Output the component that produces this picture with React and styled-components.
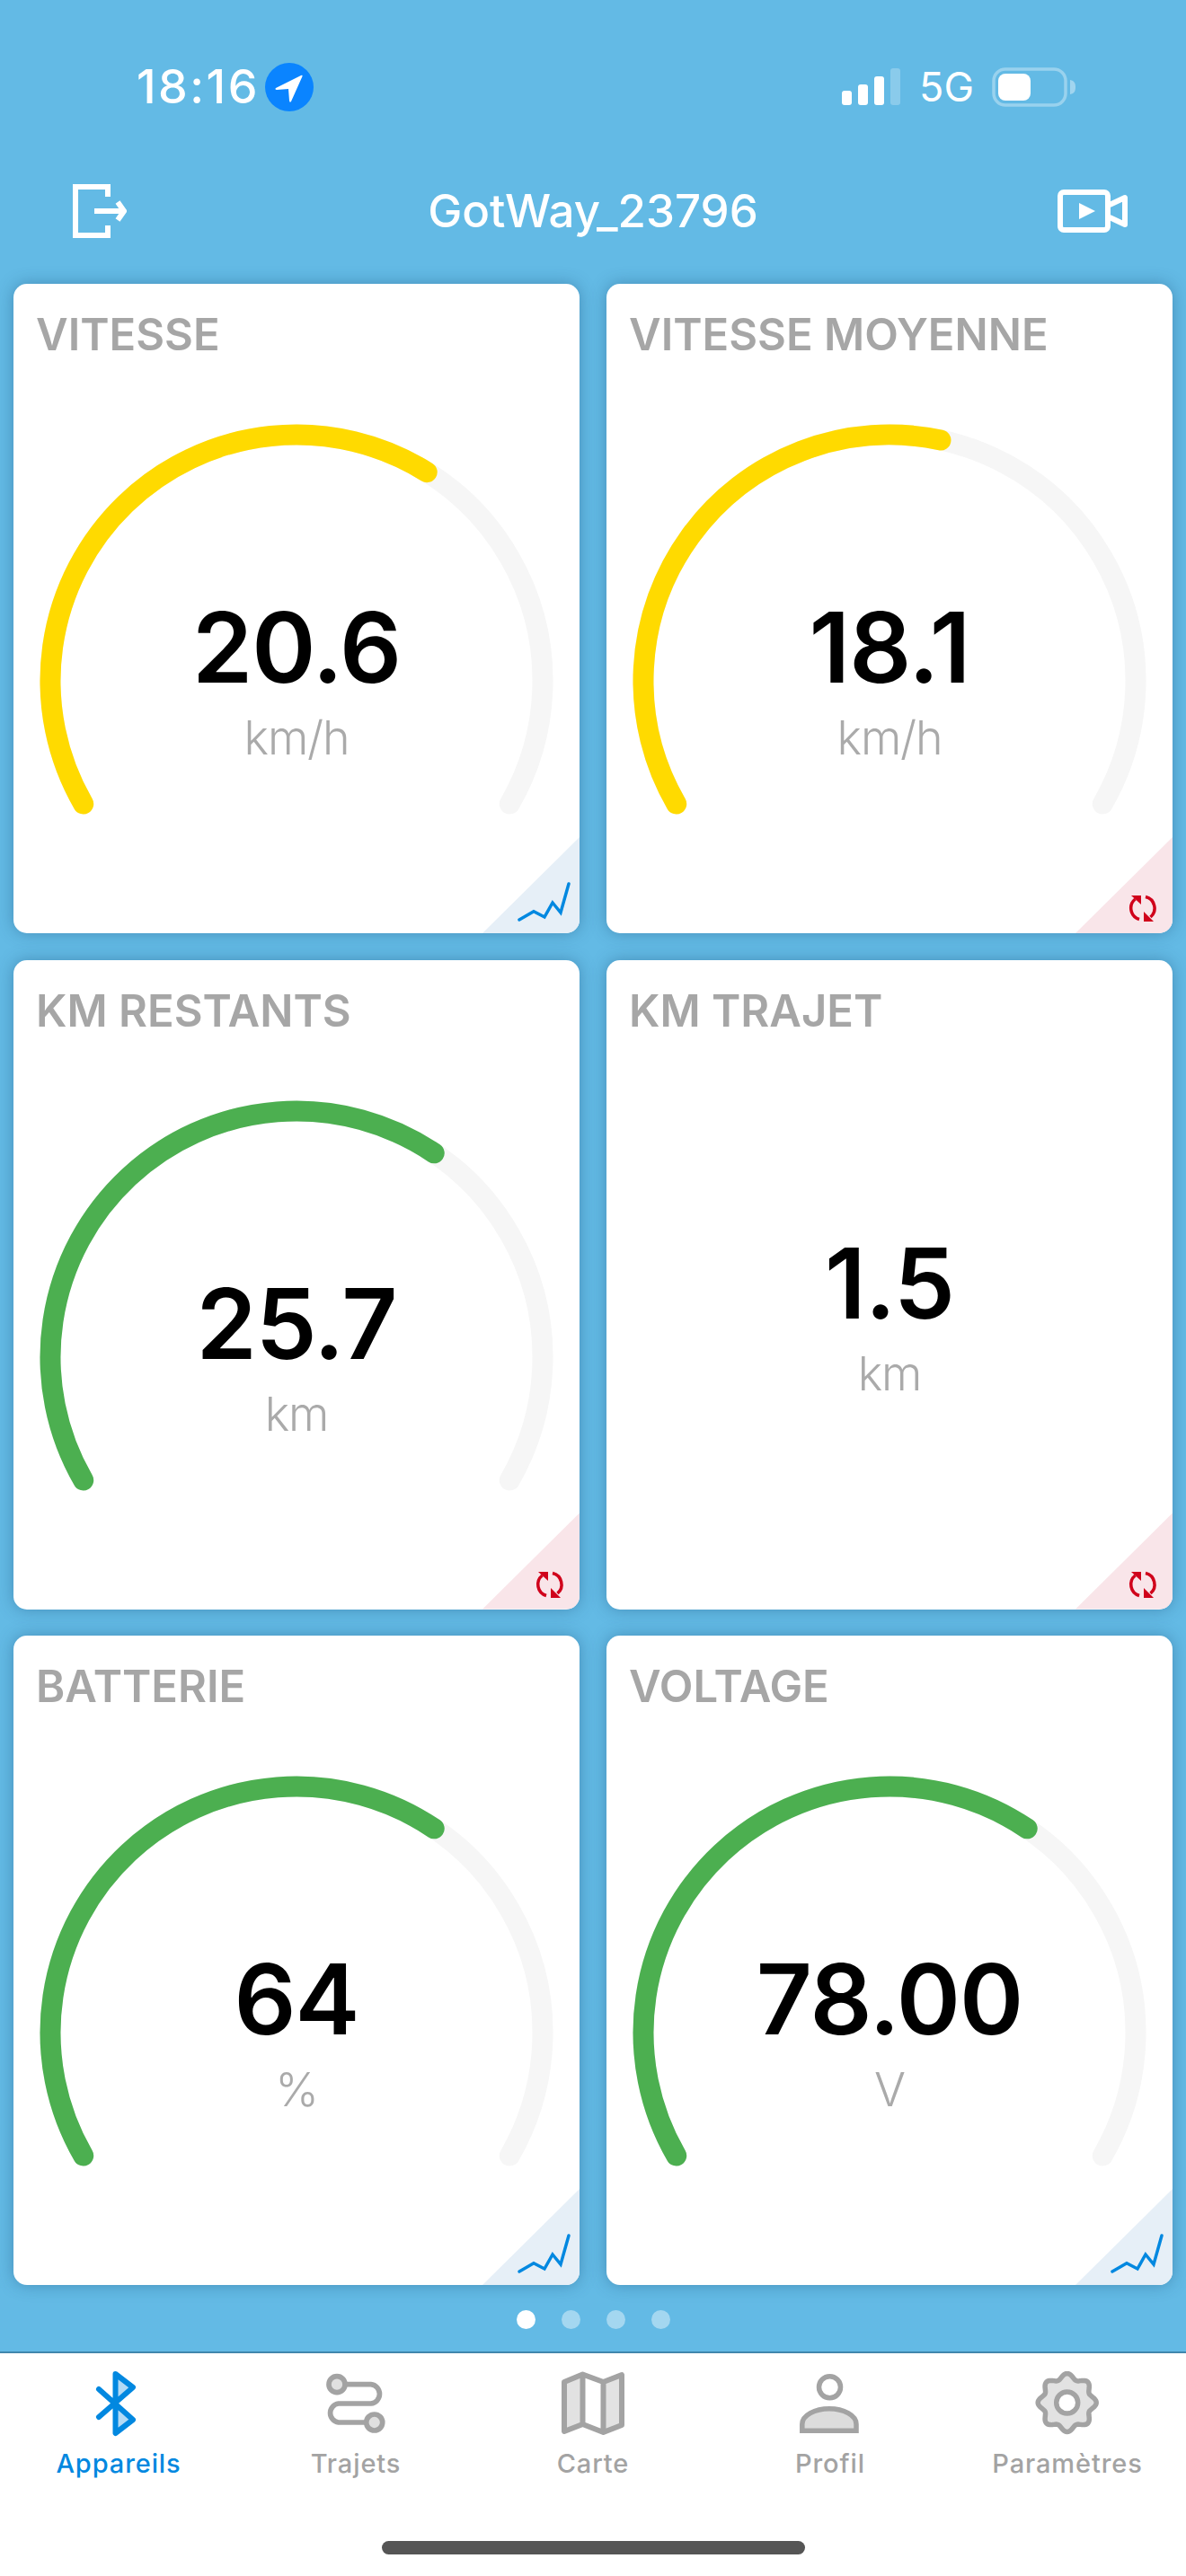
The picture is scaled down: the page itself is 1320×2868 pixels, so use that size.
import React from 'react';
import styled, { createGlobalStyle } from 'styled-components';

const GlobalStyle = createGlobalStyle`
	html, body {
		margin: 0;
		padding: 0;
		background: #63bae5;
	}
	* {
		box-sizing: border-box;
	}
`;

const Screen = styled.div`
	width: 1320px;
	height: 2868px;
	display: flex;
	flex-direction: column;
	background: #63bae5;
	font-family: Inter, 'Liberation Sans', sans-serif;
	overflow: hidden;
`;

const StatusBar = styled.div`
	height: 196px;
	padding: 70px 122px 0 152px;
	display: flex;
	justify-content: space-between;
	align-items: flex-start;
	color: #fff;
`;

const StatusLeft = styled.div`
	display: flex;
	align-items: center;
	gap: 6px;
	height: 54px;
`;

const Clock = styled.span`
	font-size: 52px;
	font-weight: 500;
	letter-spacing: 2.5px;
	line-height: 54px;
`;

const StatusRight = styled.div`
	display: flex;
	align-items: center;
	height: 54px;
`;

const NetworkLabel = styled.span`
	font-size: 45px;
	font-weight: 400;
	line-height: 54px;
	margin: 0 20px 0 21px;
`;

const Header = styled.div`
	height: 120px;
	padding: 9px 65px 0 81px;
	display: flex;
	justify-content: space-between;
	align-items: flex-start;
	position: relative;
`;

const HeaderTitle = styled.div`
	position: absolute;
	left: 0;
	right: 0;
	top: 9px;
	text-align: center;
	color: #fff;
	font-size: 51px;
	font-weight: 500;
	line-height: 60px;
`;

const CameraIcon = styled.svg`
	margin-top: 6px;
`;

const Grid = styled.div`
	padding: 0 15px;
	display: grid;
	grid-template-columns: 630px 630px;
	grid-auto-rows: 723px;
	column-gap: 30px;
	row-gap: 29.5px;
`;

const Card = styled.div`
	position: relative;
	display: flex;
	flex-direction: column;
	background: #fff;
	border-radius: 15px;
	box-shadow: 0 0 18px rgba(20, 70, 110, 0.38);
	overflow: hidden;
`;

const CardTitle = styled.div`
	position: absolute;
	top: 27px;
	left: 25px;
	color: #a6a6a6;
	font-size: 49px;
	font-weight: 600;
	line-height: 60px;
	white-space: nowrap;
`;

const GaugeSvg = styled.svg`
	position: absolute;
	left: 0;
	top: 0;
	display: block;
`;

const Readout = styled.div`
	flex: 1;
	display: flex;
	flex-direction: column;
	align-items: center;
	padding-top: ${(p) => (p.$plain ? '305px' : '350px')};
`;

const Value = styled.div`
	color: #000;
	font-size: 108px;
	font-weight: 600;
	line-height: 110px;
	letter-spacing: -1px;
	position: relative;
`;

const Unit = styled.div`
	color: #aaa;
	font-size: 52px;
	font-weight: 300;
	letter-spacing: -1.2px;
	line-height: 60px;
	margin-top: 16px;
	position: relative;
`;

const Corner = styled.div`
	position: absolute;
	right: 0;
	bottom: 0;
	width: 108px;
	height: 107px;
	background: ${(p) => (p.$kind === 'chart' ? '#e6eff7' : '#f9e5e9')};
	clip-path: polygon(100% 0, 100% 100%, 0 100%);
`;

const CornerIcon = styled.svg`
	position: absolute;
	right: 0;
	bottom: 0;
`;

const Dots = styled.div`
	height: 74px;
	padding-top: 28px;
	display: flex;
	justify-content: center;
	gap: 29px;
`;

const Dot = styled.div`
	width: 21px;
	height: 21px;
	border-radius: 50%;
	background: ${(p) => (p.$active ? '#fff' : 'rgba(255, 255, 255, 0.42)')};
`;

const TabBar = styled.div`
	flex: 1;
	position: relative;
	display: grid;
	grid-template-columns: repeat(5, 264px);
	background: #fff;
	border-top: 2px solid #4187ad;
`;

const Tab = styled.div`
	display: flex;
	flex-direction: column;
	align-items: center;
	padding-top: 20px;
	color: ${(p) => (p.$active ? '#0288e0' : '#a3a3a3')};
`;

const TabIcon = styled.svg`
	display: block;
	width: 90px;
	height: 80px;
`;

const TabLabel = styled.span`
	margin-top: 5px;
	font-size: 29px;
	font-weight: 500;
	letter-spacing: 0.9px;
	line-height: 36px;
`;

const HomeIndicator = styled.div`
	position: absolute;
	left: 425px;
	top: 209px;
	width: 471px;
	height: 15px;
	border-radius: 8px;
	background: #555;
`;

const CX = 315;
const CY = 442;
const R = 274;
const START = -120;
const END = 120;

function pointAt(angle) {
	const rad = (angle * Math.PI) / 180;
	return [CX + R * Math.sin(rad), CY - R * Math.cos(rad)];
}

function arcPath(from, to) {
	const [x1, y1] = pointAt(from);
	const [x2, y2] = pointAt(to);
	const large = to - from > 180 ? 1 : 0;
	return `M ${x1} ${y1} A ${R} ${R} 0 ${large} 1 ${x2} ${y2}`;
}

// wavy outline of the settings cog, 8 lobes with one pointing up
function cogPath(cx, cy) {
	const pts = [];
	for (let i = 0; i < 160; i++) {
		const t = (i / 160) * Math.PI * 2;
		const r = 29.5 + 3 * Math.cos(8 * t);
		pts.push(`${(cx + r * Math.sin(t)).toFixed(2)} ${(cy - r * Math.cos(t)).toFixed(2)}`);
	}
	return `M ${pts.join(' L ')} Z`;
}

function Gauge({ color, angle }) {
	return (
		<GaugeSvg width="630" height="723" viewBox="0 0 630 723">
			<path d={arcPath(START, END)} fill="none" stroke="#f6f6f6" strokeWidth="23" strokeLinecap="round" />
			<path d={arcPath(START, angle)} fill="none" stroke={color} strokeWidth="23" strokeLinecap="round" />
		</GaugeSvg>
	);
}

function CornerBadge({ kind }) {
	return (
		<>
			<Corner $kind={kind} />
			{kind === 'chart' ? (
				<CornerIcon width="108" height="107" viewBox="0 0 108 107">
					<path
						d="M41 92 L57 82.700 L69 89 L78 73 L87 84 L96 52"
						fill="none"
						stroke="#0288e0"
						strokeWidth="3.500"
						strokeLinecap="round"
					/>
				</CornerIcon>
			) : (
				<CornerIcon width="108" height="107" viewBox="0 0 108 107">
					<g fill="none" stroke="#d0021b" strokeWidth="3.500">
						<path d="M66.500 69 A13 13 0 0 0 71 91.500" />
						<path d="M78 66.500 A13 13 0 0 1 83.500 89" />
					</g>
					<path d="M62 65 H73 V75 Z" fill="#d0021b" />
					<path d="M76 83 V94 H87 Z" fill="#d0021b" />
				</CornerIcon>
			)}
		</>
	);
}

function MetricCard({ title, value, unit, color, angle, corner }) {
	return (
		<Card>
			<CardTitle>{title}</CardTitle>
			{color && <Gauge color={color} angle={angle} />}
			<Readout $plain={!color}>
				<Value>{value}</Value>
				<Unit>{unit}</Unit>
			</Readout>
			<CornerBadge kind={corner} />
		</Card>
	);
}

const cards = [
	{ title: 'VITESSE', value: '20.6', unit: 'km/h', color: '#ffda00', angle: 32, corner: 'chart' },
	{ title: 'VITESSE MOYENNE', value: '18.1', unit: 'km/h', color: '#ffda00', angle: 12, corner: 'refresh' },
	{ title: 'KM RESTANTS', value: '25.7', unit: 'km', color: '#4caf50', angle: 34, corner: 'refresh' },
	{ title: 'KM TRAJET', value: '1.5', unit: 'km', corner: 'refresh' },
	{ title: 'BATTERIE', value: '64', unit: '%', color: '#4caf50', angle: 34, corner: 'chart' },
	{ title: 'VOLTAGE', value: '78.00', unit: 'V', color: '#4caf50', angle: 34, corner: 'chart' },
];

const tabs = [
	{
		label: 'Appareils',
		active: true,
		icon: (
			<>
				<path d="M41.500 3 L61 18 L41.500 36 Z M41.500 36 L61 54 L41.500 69 Z" fill="#b3daf5" />
				<path
					d="M23 20 L61 54 L41.500 69 L41.500 3 L61 18 L23 51"
					fill="none"
					stroke="currentColor"
					strokeWidth="6"
					strokeLinecap="round"
					strokeLinejoin="round"
				/>
			</>
		),
	},
	{
		label: 'Trajets',
		icon: (
			<>
				<g fill="#e0e0e0" stroke="currentColor" strokeWidth="5.700">
					<circle cx="24" cy="14.700" r="9" />
					<circle cx="65.700" cy="57" r="9" />
				</g>
				<path
					d="M33 14.700 H61.800 A10.700 10.700 0 0 1 61.800 36 H25.700 A10.600 10.600 0 0 0 25.700 57 H56.700"
					fill="none"
					stroke="currentColor"
					strokeWidth="5.700"
				/>
			</>
		),
	},
	{
		label: 'Carte',
		icon: (
			<>
				<path d="M13 12 L33.500 3.500 V59 L13 67 Z" fill="#e2e2e2" />
				<path d="M56.500 12 L77 4 V60 L56.500 68 Z" fill="#e2e2e2" />
				<path
					d="M13 12 L33.500 3.500 L56.500 12 L77 4 V60 L56.500 68 L33.500 59 L13 67 Z M33.500 3.500 V59 M56.500 12 V68"
					fill="none"
					stroke="currentColor"
					strokeWidth="6"
					strokeLinejoin="round"
				/>
			</>
		),
	},
	{
		label: 'Profil',
		icon: (
			<>
				<path
					d="M13.800 66.200 V59 C13.800 49 28 41.800 44 41.800 C60 41.800 74 49 74 59 V66.200 Z"
					fill="#dcdcdc"
					stroke="currentColor"
					strokeWidth="5.500"
				/>
				<circle cx="44.500" cy="17.700" r="12" fill="#fff" stroke="currentColor" strokeWidth="5.500" />
			</>
		),
	},
	{
		label: 'Paramètres',
		icon: (
			<>
				<path d={cogPath(44.700, 35)} fill="#e2e2e2" stroke="currentColor" strokeWidth="5.500" />
				<circle cx="44.700" cy="35" r="12" fill="#fff" stroke="currentColor" strokeWidth="5.500" />
			</>
		),
	},
];

export default function App() {
	return (
		<>
			<GlobalStyle />
			<Screen>
				<StatusBar>
					<StatusLeft>
						<Clock>18:16</Clock>
						<svg width="54" height="54" viewBox="0 0 54 54">
							<circle cx="27" cy="27" r="27" fill="#0a84ff" />
							<path d="M12 28 L40 14 Q42 13 41.500 15 L29 43 Q27.500 45 27 42 L26 29 L13 30 Q10.500 29.500 12 28 Z" fill="#fff" />
						</svg>
					</StatusLeft>
					<StatusRight>
						<svg width="65" height="44" viewBox="0 0 65 44">
							<rect x="0" y="26" width="11" height="16" rx="3" fill="#fff" />
							<rect x="18" y="19" width="11" height="23" rx="3" fill="#fff" />
							<rect x="36" y="10" width="11" height="32" rx="3" fill="#fff" />
							<rect x="54" y="1" width="11" height="41" rx="3" fill="#fff" fillOpacity="0.25" />
						</svg>
						<NetworkLabel>5G</NetworkLabel>
						<svg width="94" height="44" viewBox="0 0 94 44">
							<rect x="2" y="2" width="80" height="40" rx="13" fill="none" stroke="#fff" strokeOpacity="0.35" strokeWidth="3.500" />
							<rect x="7" y="7" width="36" height="30" rx="8" fill="#fff" />
							<path d="M87 14 C92 15 93 18 93 22 C93 26 92 29 87 30 Z" fill="#fff" fillOpacity="0.4" />
						</svg>
					</StatusRight>
				</StatusBar>
				<Header>
					<svg width="60" height="60" viewBox="0 0 60 60">
						<path d="M39 14 V3 H3 V57 H39 V46" fill="none" stroke="#fff" strokeWidth="6" />
						<path d="M24 30 H57 M50 20 L57 30 L50 40" fill="none" stroke="#fff" strokeWidth="6" />
					</svg>
					<HeaderTitle>GotWay_23796</HeaderTitle>
					<CameraIcon width="78" height="48" viewBox="0 0 78 48">
						<rect x="3" y="3" width="53" height="42" rx="4" fill="none" stroke="#fff" strokeWidth="6" />
						<path d="M24 15 L42 24 L24 33 Z" fill="#fff" />
						<path d="M58 17 L75 9 V39 L58 31" fill="none" stroke="#fff" strokeWidth="6" strokeLinejoin="round" />
					</CameraIcon>
				</Header>
				<Grid>
					{cards.map((c) => (
						<MetricCard key={c.title} {...c} />
					))}
				</Grid>
				<Dots>
					<Dot $active />
					<Dot />
					<Dot />
					<Dot />
				</Dots>
				<TabBar>
					{tabs.map((t) => (
						<Tab key={t.label} $active={t.active}>
							<TabIcon viewBox="0 0 90 80">{t.icon}</TabIcon>
							<TabLabel>{t.label}</TabLabel>
						</Tab>
					))}
					<HomeIndicator />
				</TabBar>
			</Screen>
		</>
	);
}
